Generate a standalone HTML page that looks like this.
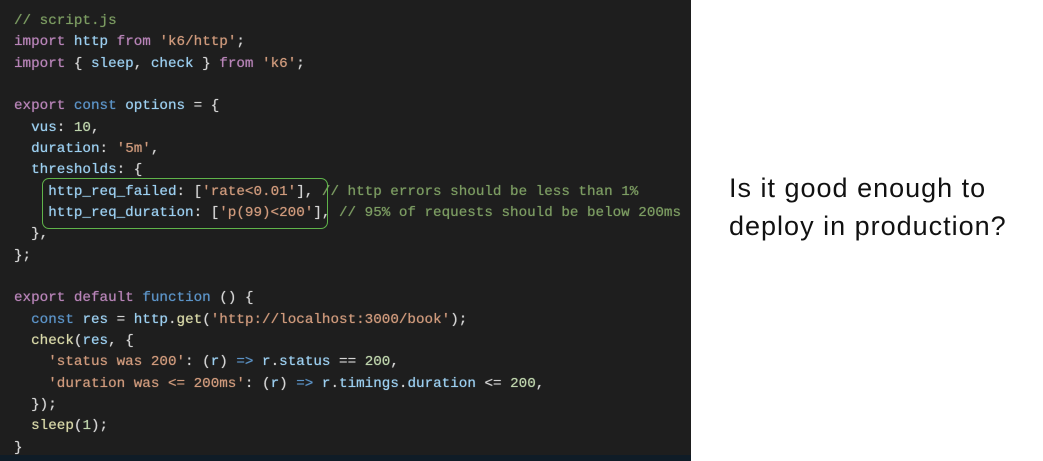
<!DOCTYPE html>
<html><head><meta charset="utf-8"><style>
html,body{margin:0;padding:0;background:#fff;width:1043px;height:461px;overflow:hidden}
#code{position:absolute;left:0;top:0;width:691px;height:461px;background:#1e1e1e}
#strip{position:absolute;left:0;top:455px;width:691px;height:6px;background:#0f1c27}
pre{position:absolute;left:14px;top:11px;margin:0;font-family:"Liberation Mono",monospace;font-size:14.25px;line-height:21.33px;color:#d4d4d4;white-space:pre;text-shadow:0 0 0.7px currentColor}
.k{color:#b884b8}.c{color:#7c9c62}.s{color:#cf9a7c}.n{color:#bed4ac}.v{color:#9ccff0}.b{color:#5c94c8}.f{color:#d8d8a8}
#box{position:absolute;left:42px;top:178px;width:284px;height:49px;border:1.5px solid #5fb34a;border-radius:7px}
#q{position:absolute;left:729px;top:169px;font-family:"Liberation Sans",sans-serif;font-size:27px;line-height:38px;color:#111;letter-spacing:1px}
</style></head><body>
<div id="code">
<pre><span class="c">// script.js</span>
<span class="k">import</span> <span class="v">http</span> <span class="k">from</span> <span class="s">'k6/http'</span>;
<span class="k">import</span> { <span class="v">sleep</span>, <span class="v">check</span> } <span class="k">from</span> <span class="s">'k6'</span>;

<span class="k">export</span> <span class="b">const</span> <span class="v">options</span> = {
  <span class="v">vus</span>: <span class="n">10</span>,
  <span class="v">duration</span>: <span class="s">'5m'</span>,
  <span class="v">thresholds</span>: {
    <span class="v">http_req_failed</span>: [<span class="s">'rate&lt;0.01'</span>], <span class="c">// http errors should be less than 1%</span>
    <span class="v">http_req_duration</span>: [<span class="s">'p(99)&lt;200'</span>], <span class="c">// 95% of requests should be below 200ms</span>
  },
};

<span class="k">export</span> <span class="k">default</span> <span class="b">function</span> () {
  <span class="b">const</span> <span class="v">res</span> = <span class="v">http</span>.<span class="f">get</span>(<span class="s">'http://localhost:3000/book'</span>);
  <span class="f">check</span>(<span class="v">res</span>, {
    <span class="s">'status was 200'</span>: (<span class="v">r</span>) <span class="b">=&gt;</span> <span class="v">r</span>.<span class="v">status</span> == <span class="n">200</span>,
    <span class="s">'duration was &lt;= 200ms'</span>: (<span class="v">r</span>) <span class="b">=&gt;</span> <span class="v">r</span>.<span class="v">timings</span>.<span class="v">duration</span> &lt;= <span class="n">200</span>,
  });
  <span class="f">sleep</span>(<span class="n">1</span>);
}</pre>
<div id="box"></div>
<div id="strip"></div>
</div>
<div id="q">Is it good enough to<br>deploy in production?</div>
</body></html>
